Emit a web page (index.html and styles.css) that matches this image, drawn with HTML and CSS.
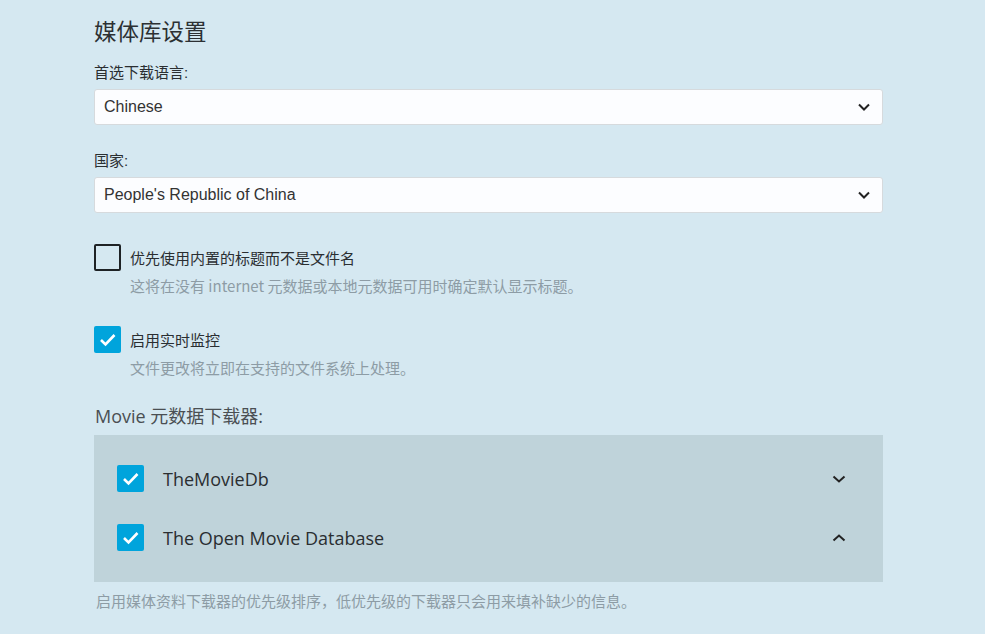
FILE: index.html
```html
<!DOCTYPE html>
<html lang="zh-CN">
<head>
<meta charset="utf-8">
<title>媒体库设置</title>
<link rel="stylesheet" href="styles.css">
</head>
<body>
<main class="page">
  <h1 class="title">媒体库设置</h1>

  <div class="field">
    <label class="field-label">首选下载语言:</label>
    <div class="select">
      <span class="select-value">Chinese</span>
      <svg class="chev" width="12" height="8" viewBox="0 0 12 8"><polyline points="1,1.5 6,6.5 11,1.5" fill="none" stroke="#222" stroke-width="2"/></svg>
    </div>
  </div>

  <div class="field field-second">
    <label class="field-label">国家:</label>
    <div class="select">
      <span class="select-value">People's Republic of China</span>
      <svg class="chev" width="12" height="8" viewBox="0 0 12 8"><polyline points="1,1.5 6,6.5 11,1.5" fill="none" stroke="#222" stroke-width="2"/></svg>
    </div>
  </div>

  <div class="check-field first-check">
    <div class="check-row">
      <span class="box box-empty"></span>
      <span class="check-label">优先使用内置的标题而不是文件名</span>
    </div>
    <div class="desc">这将在没有 internet 元数据或本地元数据可用时确定默认显示标题。</div>
  </div>

  <div class="check-field second-check">
    <div class="check-row">
      <span class="box box-checked"><svg width="27" height="27" viewBox="0 0 27 27"><polyline points="7,14 11.5,18.5 20.5,9" fill="none" stroke="#fff" stroke-width="2.6"/></svg></span>
      <span class="check-label">启用实时监控</span>
    </div>
    <div class="desc">文件更改将立即在支持的文件系统上处理。</div>
  </div>

  <h3 class="list-heading">Movie 元数据下载器:</h3>
  <div class="panel">
    <div class="panel-row">
      <span class="box box-checked"><svg width="27" height="27" viewBox="0 0 27 27"><polyline points="7,14 11.5,18.5 20.5,9" fill="none" stroke="#fff" stroke-width="2.6"/></svg></span>
      <span class="panel-label">TheMovieDb</span>
      <svg class="panel-chev" width="14" height="8" viewBox="0 0 14 8"><polyline points="1.5,1.5 7,6.5 12.5,1.5" fill="none" stroke="#222" stroke-width="2"/></svg>
    </div>
    <div class="panel-row">
      <span class="box box-checked"><svg width="27" height="27" viewBox="0 0 27 27"><polyline points="7,14 11.5,18.5 20.5,9" fill="none" stroke="#fff" stroke-width="2.6"/></svg></span>
      <span class="panel-label">The Open Movie Database</span>
      <svg class="panel-chev" width="14" height="8" viewBox="0 0 14 8"><polyline points="1.5,6.5 7,1.5 12.5,6.5" fill="none" stroke="#222" stroke-width="2"/></svg>
    </div>
  </div>
  <div class="footer-desc">启用媒体资料下载器的优先级排序，低优先级的下载器只会用来填补缺少的信息。</div>
</main>
</body>
</html>
```

FILE: styles.css
```css
html, body {
  margin: 0;
  padding: 0;
  background: #d5e8f1;
}

body {
  font-family: "Noto Sans CJK SC", "Noto Sans", sans-serif;
  color: #2e3235;
  height: 634px;
  overflow: hidden;
}

.page {
  width: 789px;
  padding-left: 94px;
}

.title {
  margin: 15px 0 0 0;
  font-size: 22.5px;
  line-height: 30px;
  font-weight: 400;
  color: #2c3033;
}

.field {
  margin-top: 18px;
}

.field-second {
  margin-top: 26px;
}

.field-label {
  display: block;
  font-size: 15px;
  line-height: 20px;
  color: #2a2e31;
  font-family: "Liberation Sans", "Noto Sans CJK SC", sans-serif;
}

.select {
  margin-top: 6px;
  height: 36px;
  box-sizing: border-box;
  background: #fcfdff;
  border: 1px solid #d6dadd;
  border-radius: 3px;
  display: flex;
  align-items: center;
  justify-content: space-between;
  padding: 0 12px 0 9px;
}

.select-value {
  font-family: "Liberation Sans", Arial, sans-serif;
  font-size: 16px;
  color: #333;
}

.chev {
  display: block;
}

.check-field.first-check {
  margin-top: 31px;
}

.check-field.second-check {
  margin-top: 30px;
}

.check-row {
  display: flex;
  align-items: center;
  gap: 9px;
  height: 27px;
}

.box {
  width: 27px;
  height: 27px;
  box-sizing: border-box;
  border-radius: 2px;
  flex: none;
  display: block;
}

.box svg {
  display: block;
}

.box-empty {
  border: 2px solid #1e2225;
}

.box-checked {
  background: #00a4dc;
}

.check-label {
  font-size: 15px;
  line-height: 20px;
  color: #2a2e31;
}

.desc {
  margin-top: 5px;
  padding-left: 36px;
  font-size: 15px;
  line-height: 20px;
  color: #8d9ca5;
}

.list-heading {
  margin: 26px 0 0 1px;
  font-size: 18px;
  line-height: 24px;
  font-weight: 400;
  color: #4a4f53;
  font-family: "Open Sans", "Noto Sans CJK SC", sans-serif;
}

.panel {
  margin-top: 7px;
  background: #bfd3da;
  padding: 30px 37px 31px 23px;
  display: flex;
  flex-direction: column;
  gap: 32px;
}

.panel-row {
  display: flex;
  align-items: center;
  height: 27px;
}

.panel-label {
  margin-left: 19px;
  flex: 1;
  font-family: "Open Sans", sans-serif;
  font-size: 18px;
  color: #2a2e31;
}

.panel-chev {
  display: block;
}

.footer-desc {
  margin-top: 9px;
  padding-left: 2px;
  font-size: 15px;
  line-height: 20px;
  color: #8d9ca5;
}
```
